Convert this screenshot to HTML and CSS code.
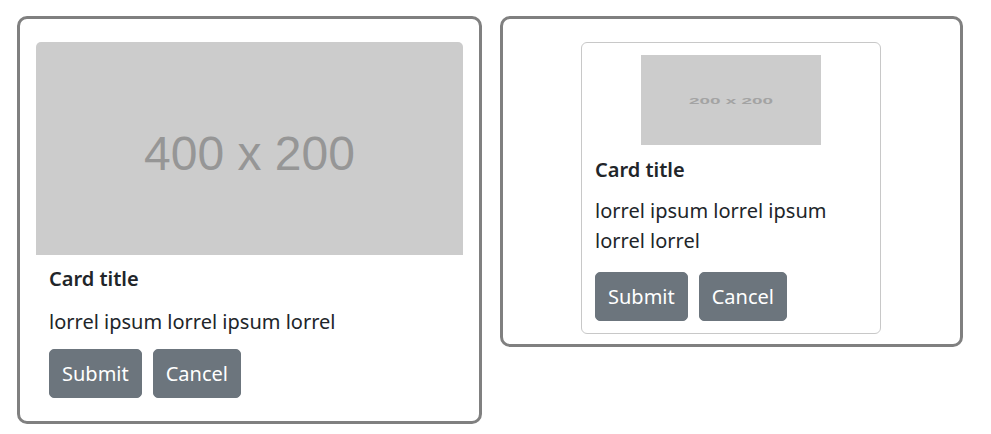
FILE: index.html
```html
<!DOCTYPE html>
<html lang="en">
<head>
<meta charset="utf-8">
<title>Cards</title>
<link rel="stylesheet" href="styles.css">
</head>
<body>
<main class="layout">
  <section class="frame">
    <article class="card card--flush">
      <svg class="card-img" viewBox="0 0 400 200" preserveAspectRatio="none" aria-label="400 x 200 placeholder">
        <rect width="400" height="200" fill="#cccccc"/>
        <text x="200" y="120.5" text-anchor="middle" class="ph-text ph-text--large">400 x 200</text>
      </svg>
      <div class="card-body">
        <h5 class="card-title">Card title</h5>
        <p class="card-text">lorrel ipsum lorrel ipsum lorrel</p>
        <div class="actions">
          <button class="btn" type="button">Submit</button>
          <button class="btn" type="button">Cancel</button>
        </div>
      </div>
    </article>
  </section>
  <section class="frame frame--center">
    <article class="card card--outlined">
      <svg class="thumb" viewBox="0 0 200 200" preserveAspectRatio="none" aria-label="200 x 200 placeholder">
        <rect width="200" height="200" fill="#cccccc"/>
        <text x="100" y="109" text-anchor="middle" class="ph-text ph-text--small">200 x 200</text>
      </svg>
      <h5 class="card-title card-title--compact">Card title</h5>
      <p class="card-text card-text--compact">lorrel ipsum lorrel ipsum lorrel lorrel</p>
      <div class="actions">
        <button class="btn" type="button">Submit</button>
        <button class="btn" type="button">Cancel</button>
      </div>
    </article>
  </section>
</main>
</body>
</html>
```
FILE: styles.css
```css
* { box-sizing: border-box; }

html, body {
  margin: 0;
  background: #ffffff;
}

body {
  font-family: "Noto Sans", "Open Sans", sans-serif;
  color: #212529;
  font-size: 20px;
  line-height: 1.5;
}

.layout {
  display: grid;
  grid-template-columns: 465px 463px;
  column-gap: 18px;
  align-items: start;
  padding: 16px 0 0 17px;
}

.frame {
  border: 3px solid #808080;
  border-radius: 10px;
  padding: 23px 16px 10px 16px;
}

.frame--center {
  display: flex;
  justify-content: center;
  padding-right: 17px;
}

.card {
  background: #ffffff;
  display: flex;
  flex-direction: column;
}

.card--flush {
  border-radius: 5px;
}

.card--outlined {
  width: 300px;
  border: 1px solid #c8c8c8;
  border-radius: 6px;
  padding: 12px 13px 12px 13px;
}

.card-img {
  display: block;
  width: 100%;
  height: 213px;
  border-radius: 5px 5px 0 0;
}

.thumb {
  display: block;
  width: 180px;
  height: 90px;
  align-self: center;
}

.ph-text {
  font-family: "Liberation Sans", Arial, sans-serif;
}

.ph-text--large {
  font-size: 45px;
  fill: #969696;
}

.ph-text--small {
  font-size: 21px;
  fill: #a3a3a3;
  font-weight: 700;
}

.card-body {
  padding: 12px 13px 13px 13px;
}

.card-title {
  margin: 0 0 16px 0;
  font-size: 20px;
  font-weight: 600;
  line-height: 24px;
}

.card-title--compact {
  margin: 13px 0 14px 0;
}

.card-text {
  margin: 0 0 12px 0;
}

.card-text--compact {
  margin-bottom: 16px;
}

.actions {
  display: flex;
  gap: 11px;
}

.btn {
  font-family: "Noto Sans", "Open Sans", sans-serif;
  font-size: 20px;
  line-height: 30px;
  color: #ffffff;
  background: #6c757d;
  border: 1px solid #6c757d;
  border-radius: 5px;
  padding: 8.5px 12px;
  cursor: pointer;
}
```
